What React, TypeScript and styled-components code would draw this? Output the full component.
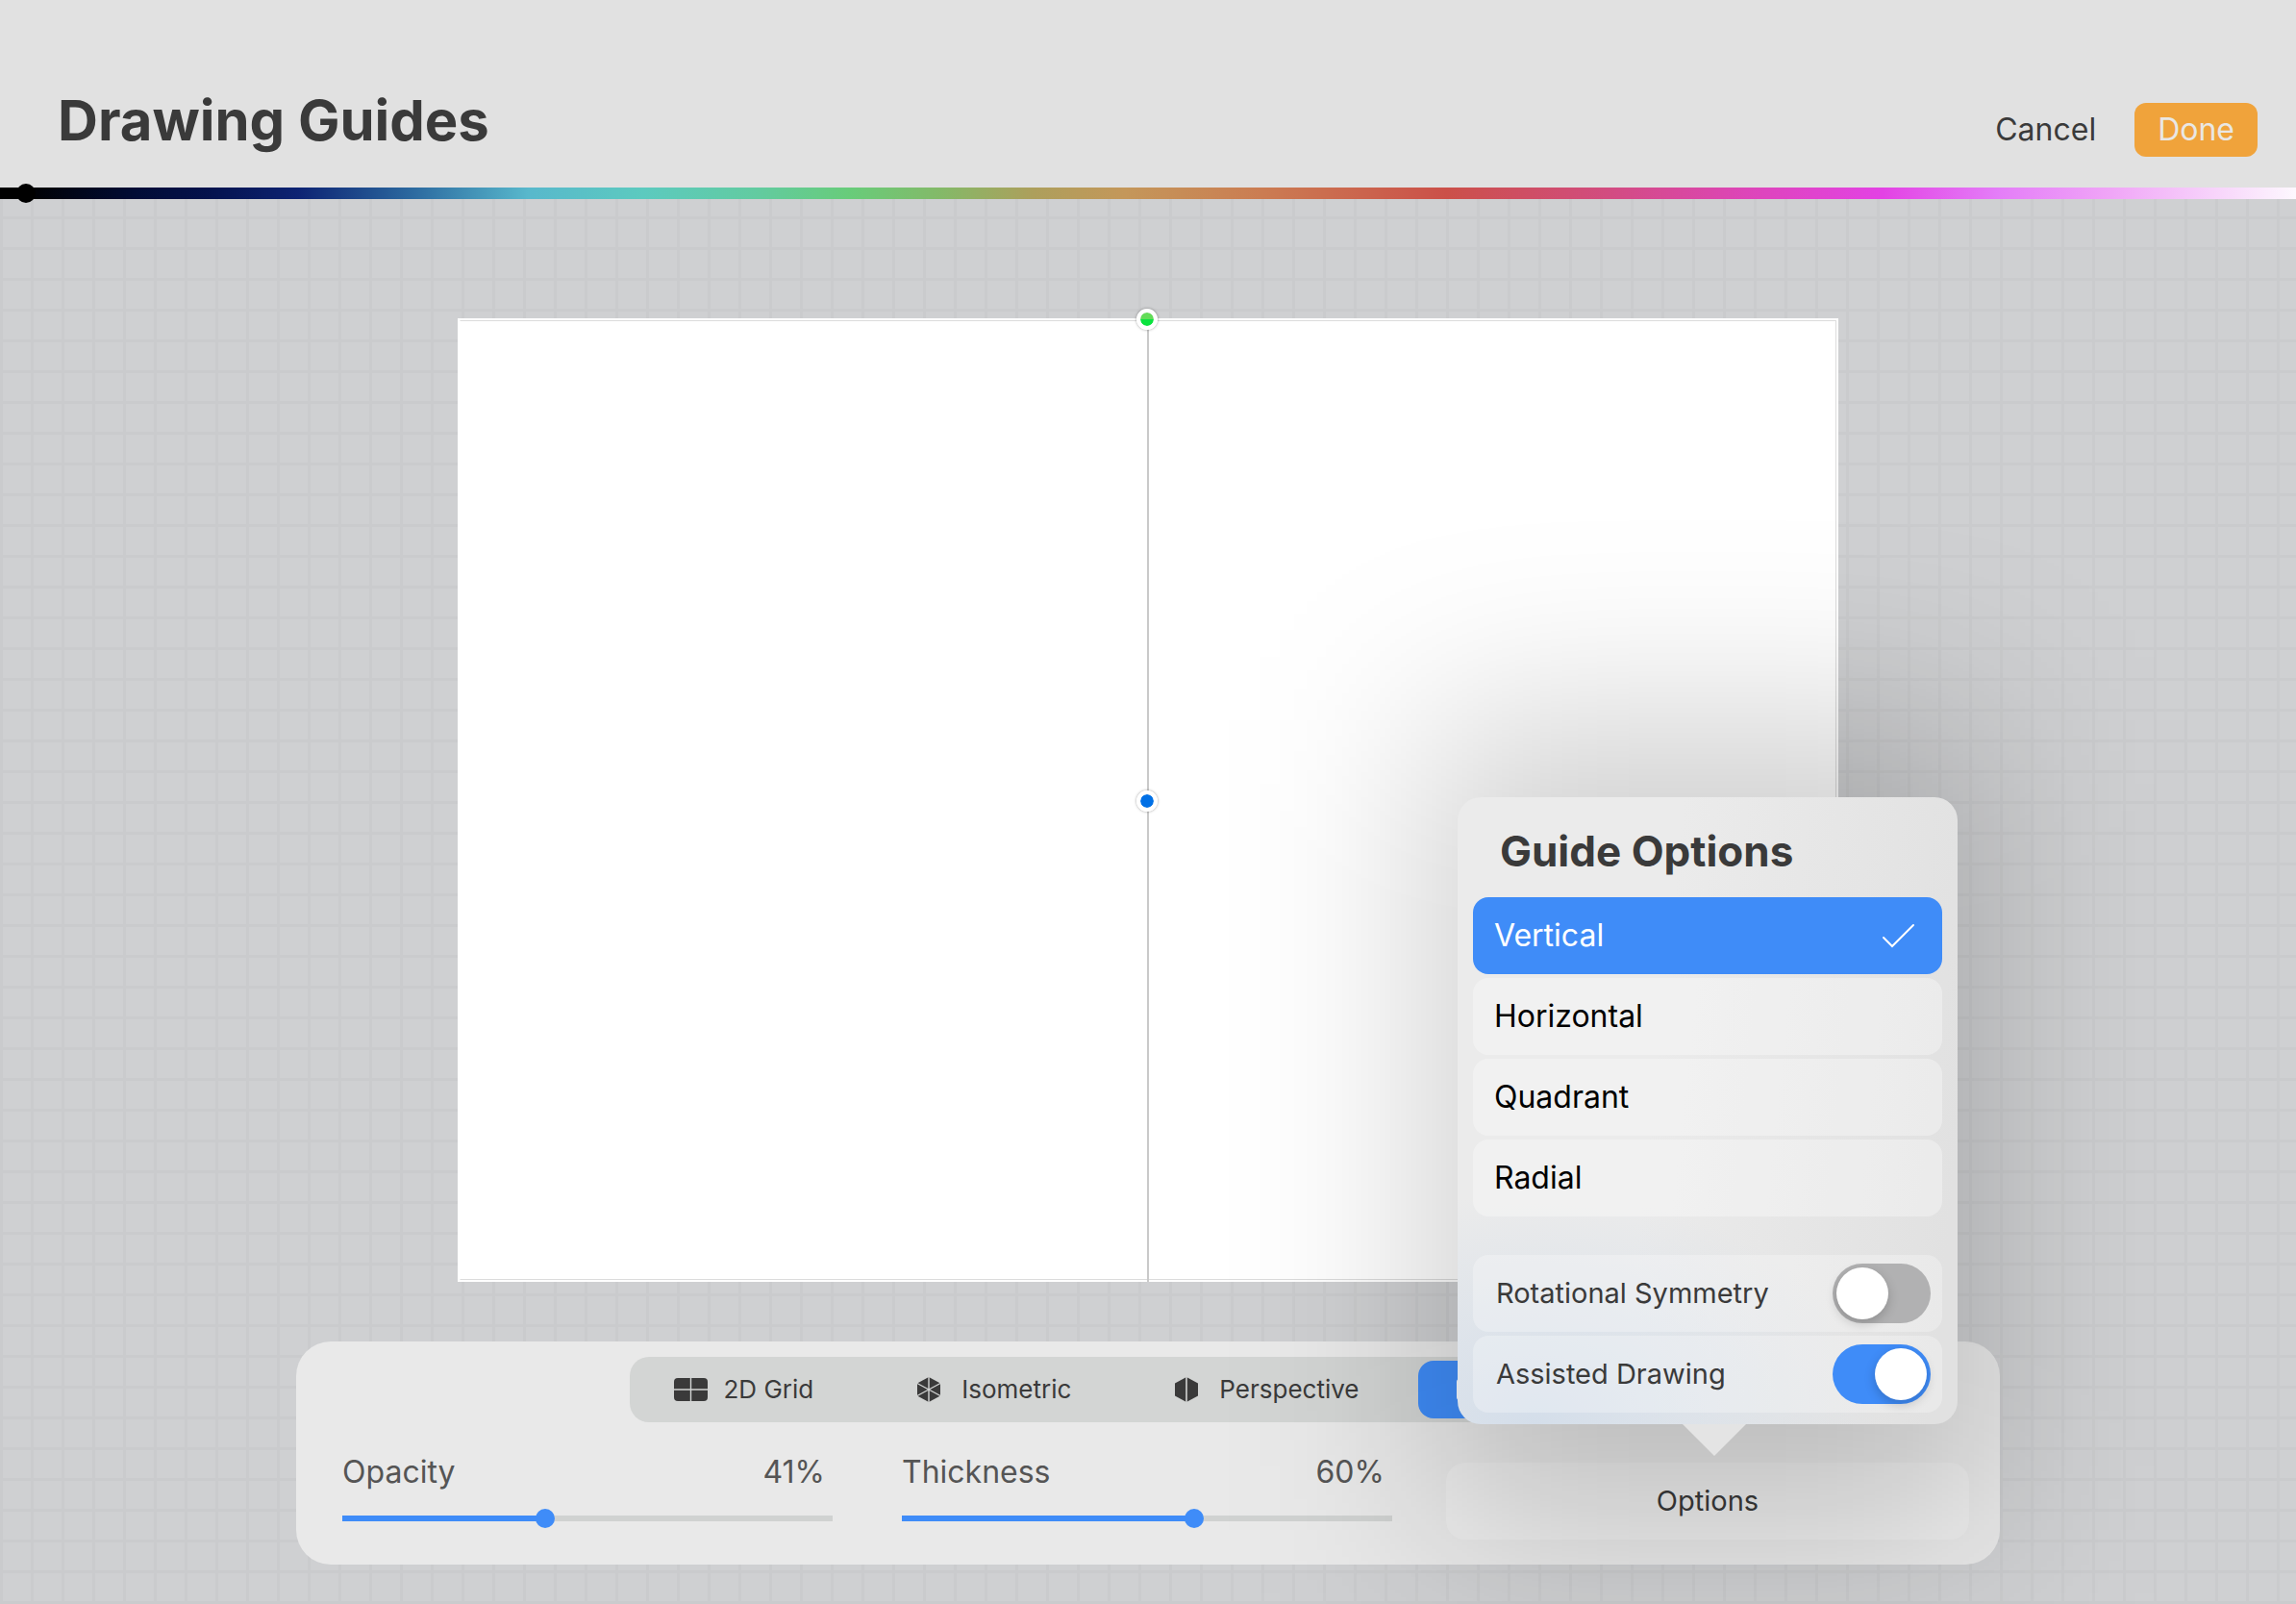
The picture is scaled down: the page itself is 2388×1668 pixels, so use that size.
import React, { useState } from "react";
import styled, { createGlobalStyle, css } from "styled-components";

const INK = "#3a3a3a";
const BLUE = "#3f8cf8";
const FONT = `Inter, "Liberation Sans", sans-serif`;

const GlobalStyle = createGlobalStyle`
  *, *::before, *::after { box-sizing: border-box; }
  body {
    margin: 0;
    background: #cfd0d2;
    color: ${INK};
    font-family: ${FONT};
  }
  button, input { font: inherit; color: inherit; margin: 0; }
`;

const Page = styled.div`
  display: flex;
  flex-direction: column;
  min-height: 100vh;
  overflow: hidden;
`;

const Header = styled.header`
  display: flex;
  align-items: flex-end;
  justify-content: space-between;
  height: 195px;
  padding: 0 40px 32px 60px;
  background: #e1e1e1;
`;

const Title = styled.h1`
  margin: 0;
  font-size: 58px;
  line-height: 76px;
  font-weight: 700;
`;

const Actions = styled.div`
  display: flex;
  gap: 16px;
`;

const ActionButton = styled.button<{ $primary?: boolean }>`
  height: 56px;
  padding: 0 24px;
  border: 0;
  border-radius: 12px;
  font-size: 32px;
  line-height: 40px;
  background: ${(p) => (p.$primary ? "#f0a33b" : "transparent")};
  color: ${(p) => (p.$primary ? "#e9e7e4" : INK)};
`;

const HueRange = styled.input`
  appearance: none;
  display: block;
  position: relative;
  z-index: 1;
  width: 100%;
  height: 12px;
  background: linear-gradient(
    90deg,
    #000 0%, #000 1%, #010c36 6%, #04124c 9%, #0d2373 13%, #2c6aa0 18%,
    #58b8cc 23%, #5ccabf 28%, #62cba0 33%, #68cc7a 37%, #84b968 41%,
    #ad9f5c 45%, #c4975a 49%, #cb7c52 55%, #cb5049 63%, #d24c80 70%,
    #dd45b8 76%, #e342e4 82%, #e47df8 87%, #f0a6f7 92%, #fdf8fe 100%
  );
  &::-webkit-slider-thumb {
    appearance: none;
    width: 20px;
    height: 20px;
    border-radius: 50%;
    background: #000;
  }
`;

const Workspace = styled.main`
  flex: 1;
  display: flex;
  flex-direction: column;
  align-items: center;
  gap: 62px;
  padding: 124px 0 40px;
  background:
    linear-gradient(90deg, #cacbcd 3px, transparent 3px) 0 0 / 32px 32px,
    linear-gradient(#cacbcd 3px, transparent 3px) 0 18px / 32px 32px,
    #cfd0d2;
`;

const Canvas = styled.section`
  position: relative;
  width: 60.1%;
  aspect-ratio: 1436 / 1003;
  padding: 2px;
  background: #fff;
  &::before {
    content: "";
    display: block;
    height: 100%;
    border: 1px solid #dcdcdc;
    border-left-color: #fff;
  }
`;

const GuideLine = styled.div`
  position: absolute;
  top: 0;
  bottom: 0;
  left: 50%;
  width: 2px;
  margin-left: -1px;
  background: #c9c9c9;
`;

const Handle = styled.button<{ $top: string; $fill: string }>`
  position: absolute;
  top: ${(p) => p.$top};
  left: 50%;
  width: 22px;
  height: 22px;
  margin: -10px 0 0 -12px;
  padding: 0;
  border: 4px solid #fff;
  border-radius: 50%;
  background: ${(p) => p.$fill} padding-box;
  box-shadow: 0 0 3px rgba(0, 0, 0, 0.4);
`;

const Panel = styled.section`
  display: flex;
  flex-direction: column;
  align-items: center;
  width: 74.2%;
  padding: 16px 32px 26px 48px;
  border-radius: 36px;
  background: #e9e9e9;
`;

const Segments = styled.div`
  display: flex;
  gap: 22px;
  margin-right: 16px;
  padding: 4px 6px;
  border-radius: 20px;
  background: #d3d5d4;
`;

const Segment = styled.button<{ $selected: boolean }>`
  display: flex;
  align-items: center;
  gap: 16px;
  height: 60px;
  min-width: ${(p) => (p.$selected ? "252px" : "0")};
  padding: 0 40px;
  border: 0;
  border-radius: 16px;
  font-size: 26px;
  line-height: 32px;
  white-space: nowrap;
  background: ${(p) => (p.$selected ? BLUE : "transparent")};
  color: ${(p) => (p.$selected ? "#fff" : INK)};
  svg { display: block; flex: none; }
`;

const Controls = styled.div`
  display: flex;
  align-self: stretch;
  gap: 56px;
  margin-top: 24px;
`;

const Sliders = styled.div`
  flex: 1;
  display: grid;
  grid-template-columns: 1fr 1fr;
  gap: 72px;
`;

const SliderField = styled.label`
  display: flex;
  flex-direction: column;
  gap: 10px;
  color: #555;
`;

const SliderCaption = styled.span`
  display: flex;
  justify-content: space-between;
  padding-right: 8px;
  font-size: 32px;
  line-height: 56px;
`;

const Range = styled.input`
  appearance: none;
  display: block;
  width: 100%;
  height: 20px;
  background: transparent;
  &::-webkit-slider-runnable-track {
    height: 6px;
    background: linear-gradient(
      90deg,
      ${BLUE} var(--fill),
      #d0d2d1 var(--fill)
    );
  }
  &::-webkit-slider-thumb {
    appearance: none;
    width: 20px;
    height: 20px;
    margin-top: -7px;
    border-radius: 50%;
    background: ${BLUE};
  }
`;

const OptionsAnchor = styled.div`
  position: relative;
  width: 544px;
  padding-top: 18px;
`;

const OptionsButton = styled.button`
  display: block;
  width: 100%;
  height: 80px;
  border: 0;
  border-radius: 20px;
  background: rgba(255, 255, 255, 0.26);
  font-size: 29px;
  line-height: 40px;
`;

const Popover = styled.div`
  position: absolute;
  right: 12px;
  bottom: 120px;
  z-index: 2;
  width: 520px;
  &::before {
    content: "";
    position: absolute;
    inset: -80px -30px -110px;
    z-index: -1;
    background: rgba(0, 0, 0, 0.19);
    filter: blur(100px);
    pointer-events: none;
  }
`;

const PopoverBody = styled.div`
  padding: 0 16px 12px;
  border-radius: 24px;
  background:
    radial-gradient(
      ellipse 360px 240px at 80px 100%,
      #d4deea,
      rgba(212, 222, 234, 0.5) 50%,
      rgba(212, 222, 234, 0)
    ),
    linear-gradient(96deg, #ebebeb 40%, #e1e1e1 95%);
`;

const Caret = styled.svg`
  position: absolute;
  top: 100%;
  left: 234px;
  display: block;
`;

const PopoverTitle = styled.h2`
  margin: 0;
  padding: 28px 28px 20px;
  font-size: 44px;
  line-height: 56px;
  font-weight: 700;
`;

const Rows = styled.div`
  display: grid;
  gap: 4px;
  & + & { margin-top: 40px; }
`;

const row = css`
  display: flex;
  align-items: center;
  justify-content: space-between;
  height: 80px;
  border-radius: 16px;
  line-height: 40px;
`;

const Choice = styled.label<{ $selected: boolean }>`
  ${row}
  position: relative;
  padding: 0 28px 0 22px;
  font-size: 32px;
  background: ${(p) => (p.$selected ? BLUE : "rgba(255, 255, 255, 0.33)")};
  color: ${(p) => (p.$selected ? "#fff" : "#000")};
  input {
    position: absolute;
    inset: 0;
    width: 100%;
    height: 100%;
    opacity: 0;
  }
`;

const SwitchRow = styled.label`
  ${row}
  padding: 0 12px 0 24px;
  font-size: 29px;
  background: rgba(255, 255, 255, 0.28);
`;

const Switch = styled.input`
  appearance: none;
  display: flex;
  width: 102px;
  height: 62px;
  padding: 4px;
  border-radius: 31px;
  background: #b1b1b2;
  &::before {
    content: "";
    width: 54px;
    height: 54px;
    border-radius: 50%;
    background: #fff;
    box-shadow: 0 4px 12px rgba(0, 0, 0, 0.2);
  }
  &:checked {
    justify-content: flex-end;
    background: ${BLUE};
  }
`;

type IconProps = { children: React.ReactNode };
const Icon = ({ children }: IconProps) => (
  <svg width="36" height="28" viewBox="0 0 36 28" aria-hidden="true">
    {children}
  </svg>
);

const GridIcon = () => (
  <Icon>
    <rect y="2" width="35" height="24" rx="4" fill="currentColor" />
    <path d="M17.5 2v24M0 14h35" stroke="#d3d5d4" strokeWidth="1.4" />
  </Icon>
);

const IsometricIcon = () => (
  <Icon>
    <path d="M18 1l12 6.500v13L18 27 6 20.500V7.500z" fill="currentColor" />
    <path
      d="M18 1v26M5 7l26 14M31 7L5 21"
      stroke="#d3d5d4"
      strokeWidth="1.4"
    />
  </Icon>
);

const PerspectiveIcon = () => (
  <Icon>
    <path d="M18 1l12 6.500v13L18 27 6 20.500V7.500z" fill="currentColor" />
    <path d="M18 1v26" stroke="#d3d5d4" strokeWidth="1.6" />
  </Icon>
);

const SymmetryIcon = () => (
  <Icon>
    <rect y="3" width="16" height="22" rx="3" fill="currentColor" />
    <rect x="19" y="3" width="16" height="22" rx="3" fill="currentColor" />
  </Icon>
);

const guides = [
  { name: "2D Grid", icon: <GridIcon /> },
  { name: "Isometric", icon: <IsometricIcon /> },
  { name: "Perspective", icon: <PerspectiveIcon /> },
  { name: "Symmetry", icon: <SymmetryIcon /> },
];

const choices = ["Vertical", "Horizontal", "Quadrant", "Radial"];

function Slider({ label, initial }: { label: string; initial: number }) {
  const [value, setValue] = useState(initial);
  return (
    <SliderField>
      <SliderCaption>
        <span>{label}</span>
        <span>{value}%</span>
      </SliderCaption>
      <Range
        type="range"
        value={value}
        onChange={(e) => setValue(Number(e.target.value))}
        style={{ "--fill": `${value}%` } as React.CSSProperties}
      />
    </SliderField>
  );
}

export default function App() {
  const [guide, setGuide] = useState("Symmetry");
  const [choice, setChoice] = useState("Vertical");

  return (
    <Page>
      <GlobalStyle />
      <Header>
        <Title>Drawing Guides</Title>
        <Actions>
          <ActionButton type="button">Cancel</ActionButton>
          <ActionButton type="button" $primary>
            Done
          </ActionButton>
        </Actions>
      </Header>
      <HueRange
        type="range"
        min={0}
        max={1000}
        defaultValue={7}
        aria-label="Guide colour"
      />
      <Workspace>
        <Canvas aria-label="Canvas">
          <GuideLine />
          <Handle
            type="button"
            aria-label="Rotate guide"
            $top="0px"
            $fill="linear-gradient(#63dc58 50%, #0be33f 50%)"
          />
          <Handle
            type="button"
            aria-label="Move guide"
            $top="50%"
            $fill="linear-gradient(#0070e6, #0070e6)"
          />
        </Canvas>
        <Panel>
          <Segments>
            {guides.map((g) => (
              <Segment
                key={g.name}
                type="button"
                aria-label={g.name}
                aria-pressed={g.name === guide}
                $selected={g.name === guide}
                onClick={() => setGuide(g.name)}
              >
                {g.icon}
                {g.name !== guide && g.name}
              </Segment>
            ))}
          </Segments>
          <Controls>
            <Sliders>
              <Slider label="Opacity" initial={41} />
              <Slider label="Thickness" initial={60} />
            </Sliders>
            <OptionsAnchor>
              <OptionsButton type="button">Options</OptionsButton>
              <Popover role="dialog" aria-label="Guide Options">
                <PopoverBody>
                  <PopoverTitle>Guide Options</PopoverTitle>
                  <Rows role="radiogroup" aria-label="Symmetry type">
                    {choices.map((c) => (
                      <Choice key={c} $selected={c === choice}>
                        <input
                          type="radio"
                          name="symmetry"
                          checked={c === choice}
                          onChange={() => setChoice(c)}
                        />
                        {c}
                        {c === choice && (
                          <svg width="36" height="28" viewBox="0 0 36 28" fill="none">
                            <path
                              d="M3 16l9 9L34 3"
                              stroke="#fff"
                              strokeWidth="2"
                              strokeLinecap="round"
                            />
                          </svg>
                        )}
                      </Choice>
                    ))}
                  </Rows>
                  <Rows>
                    <SwitchRow>
                      Rotational Symmetry
                      <Switch type="checkbox" role="switch" />
                    </SwitchRow>
                    <SwitchRow>
                      Assisted Drawing
                      <Switch type="checkbox" role="switch" defaultChecked />
                    </SwitchRow>
                  </Rows>
                </PopoverBody>
                <Caret width="66" height="33" viewBox="0 0 66 33">
                  <path d="M0 0h66L33 33z" fill="#e4e4e4" />
                </Caret>
              </Popover>
            </OptionsAnchor>
          </Controls>
        </Panel>
      </Workspace>
    </Page>
  );
}
